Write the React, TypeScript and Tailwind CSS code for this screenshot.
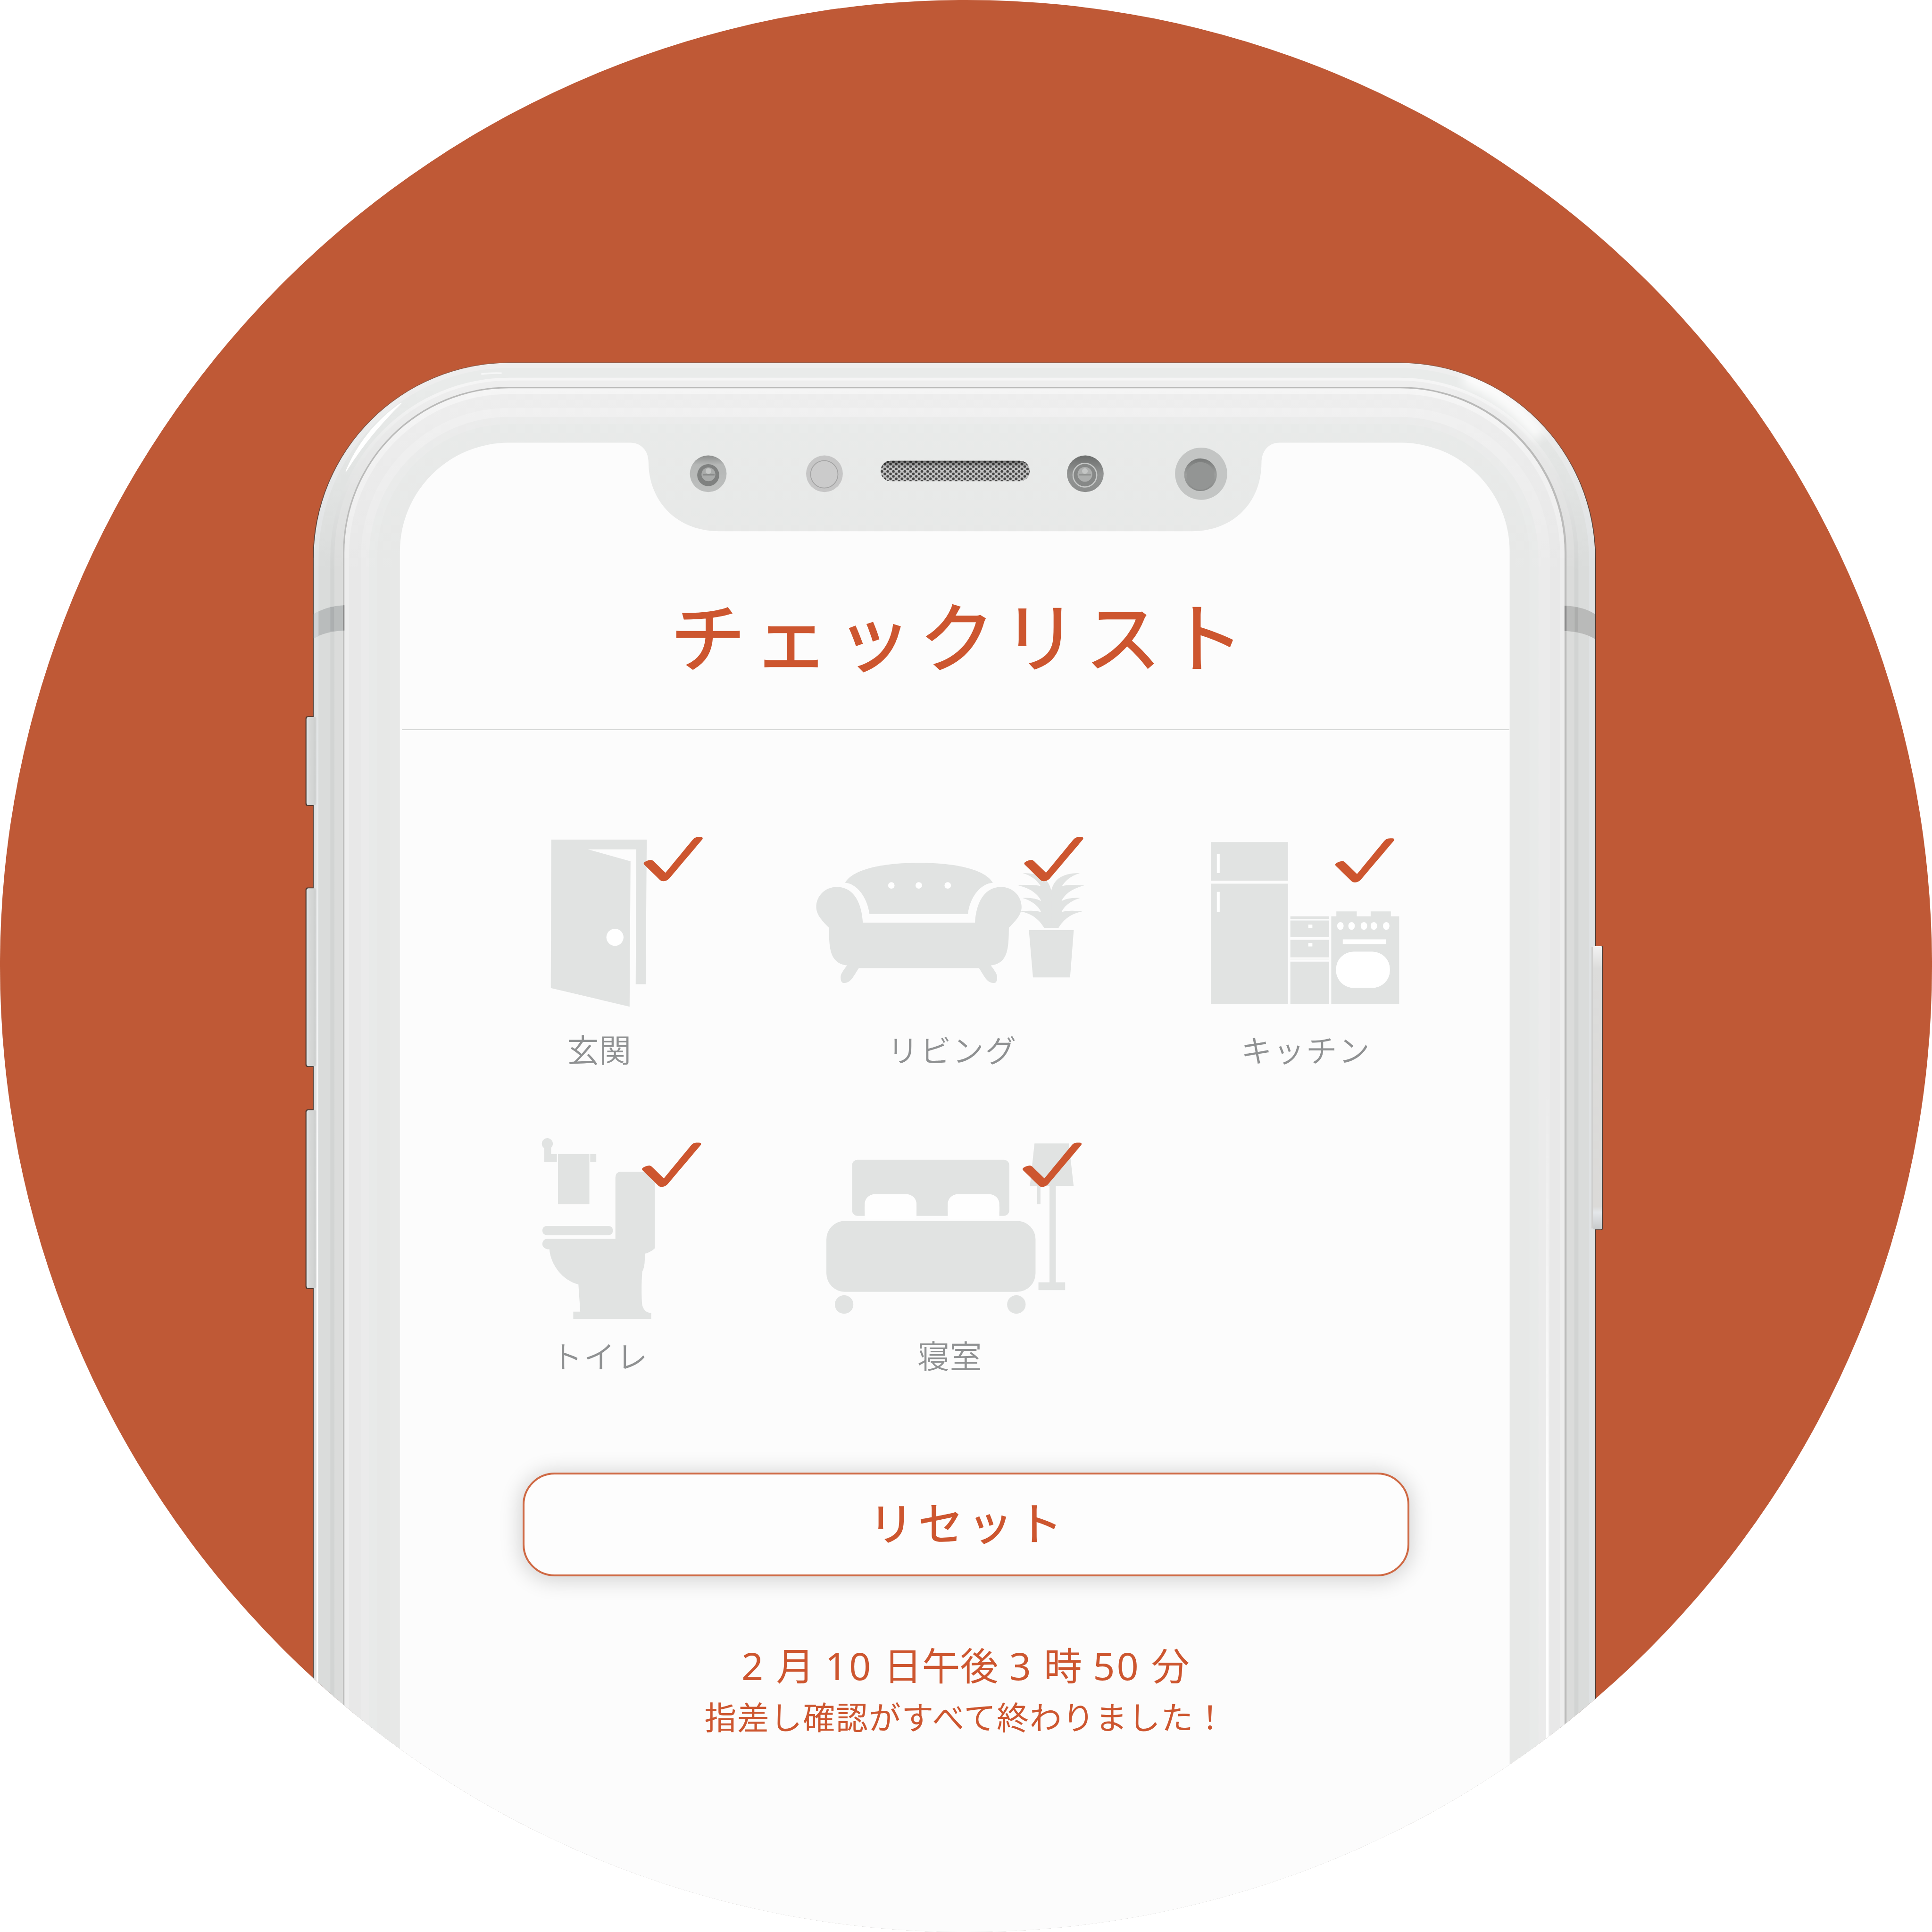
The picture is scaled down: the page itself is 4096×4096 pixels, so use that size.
import type { ReactNode } from "react";

const SHADE = "#e1e3e2";
const ACCENT = "#cd562f";

/* ---------- Phone hardware ---------- */

type Layer = { l: number; t: number; r: number; rad: number; top: string; side: string };

const LAYERS: Layer[] = [
  { l: 767, t: 888.5, r: 3913, rad: 482, top: "#8a5a48", side: "#4a3a33" },
  { l: 769, t: 890, r: 3911, rad: 480, top: "#eeeeee", side: "#dfe2e3" },
  { l: 781, t: 902, r: 3896, rad: 468, top: "#e9ebea", side: "#dadcdb" },
  { l: 810, t: 926, r: 3870, rad: 440, top: "#f5f5f5", side: "#d2d4d3" },
  { l: 820, t: 933, r: 3860, rad: 430, top: "#eeeeee", side: "#dbdcdb" },
  { l: 841, t: 948.5, r: 3841, rad: 406, top: "#b9b9b8", side: "#bcbcbb" },
  { l: 844.5, t: 952, r: 3836, rad: 403, top: "#f5f5f5", side: "#ededed" },
  { l: 856, t: 966, r: 3825, rad: 392, top: "#eeeeee", side: "#e8e8e8" },
  { l: 885, t: 1000, r: 3800, rad: 363, top: "#f1f1f1", side: "#ebebeb" },
  { l: 905, t: 1022, r: 3772, rad: 343, top: "#ececec", side: "#e8eae9" },
  { l: 925, t: 1040, r: 3750, rad: 323, top: "#e9ebea", side: "#e7e8e7" },
];

const shell = (l: number, t: number, r: number, rad: number) =>
  `M${l},4740 V${t + rad} A${rad},${rad} 0 0 1 ${l + rad},${t} H${r - rad} A${rad},${rad} 0 0 1 ${r},${t + rad} V4740 Z`;

const LEFT_BUTTONS = [
  { y: 1756, h: 220 },
  { y: 2176, h: 440 },
  { y: 2720, h: 440 },
];

function PhoneHardware() {
  return (
    <svg className="col-start-1 row-start-1 size-[4096px]" viewBox="0 0 4737 4737" fill="none" aria-hidden="true">
      <defs>
        {LAYERS.map((s, i) => (
          <linearGradient key={i} id={`shell${i}`} gradientUnits="userSpaceOnUse" x1="0" y1="900" x2="0" y2="1400">
            <stop offset="0.1" stopColor={s.top} />
            <stop offset="1" stopColor={s.side} />
          </linearGradient>
        ))}
        <linearGradient id="button" x1="0" y1="0" x2="0" y2="1">
          <stop offset="0" stopColor="#f2f2f2" />
          <stop offset="0.08" stopColor="#dcdcdb" />
          <stop offset="0.92" stopColor="#dbdad8" />
          <stop offset="0.94" stopColor="#e4e7ea" />
          <stop offset="1" stopColor="#c8cacb" />
        </linearGradient>
        <linearGradient id="key" x1="0" y1="0" x2="1" y2="0">
          <stop offset="0" stopColor="#e6eaeb" />
          <stop offset="0.25" stopColor="#d8dad9" />
          <stop offset="0.65" stopColor="#d2d4d3" />
          <stop offset="0.85" stopColor="#cccecd" />
          <stop offset="1" stopColor="#dddfe0" />
        </linearGradient>
        <linearGradient id="gleam" x1="0" y1="0" x2="0" y2="1">
          <stop offset="0" stopColor="#fff" stopOpacity="0" />
          <stop offset="0.5" stopColor="#fff" stopOpacity="1" />
        </linearGradient>
        <linearGradient id="lens" x1="0" y1="0" x2="0" y2="1">
          <stop offset="0" stopColor="#777978" />
          <stop offset="0.5" stopColor="#9c9e9d" />
          <stop offset="1" stopColor="#868887" />
        </linearGradient>
        <linearGradient id="rim" x1="0" y1="0" x2="0" y2="1">
          <stop offset="0" stopColor="#8b8d8c" />
          <stop offset="0.25" stopColor="#b5b7b6" />
          <stop offset="1" stopColor="#bdbfbe" />
        </linearGradient>
        <linearGradient id="rimDark" x1="0" y1="0" x2="0" y2="1">
          <stop offset="0" stopColor="#6b6d6c" />
          <stop offset="0.5" stopColor="#929493" />
          <stop offset="1" stopColor="#8b8d8c" />
        </linearGradient>
        <pattern id="mesh" width="14" height="12" patternUnits="userSpaceOnUse" x="2159" y="1129">
          <rect width="14" height="12" fill="#c4c4c4" />
          <circle cx="3.5" cy="3" r="3.3" fill="#444" />
          <circle cx="10.5" cy="9" r="3.3" fill="#444" />
        </pattern>
        <linearGradient id="meshShade" x1="0" y1="0" x2="0" y2="1">
          <stop offset="0" stopColor="#000" stopOpacity="0.5" />
          <stop offset="0.3" stopColor="#000" stopOpacity="0" />
        </linearGradient>
        <filter id="soft" x="-20%" y="-20%" width="140%" height="140%">
          <feGaussianBlur stdDeviation="12" />
        </filter>
        <clipPath id="band">
          <path d={shell(769, 890, 3911, 480)} />
        </clipPath>
      </defs>

      {LEFT_BUTTONS.map((b) => (
        <rect key={b.y} x="749" y={b.y} width="30" height={b.h} rx="5" fill="#4a3a33" />
      ))}
      <rect x="3900" y="2319" width="30" height="696" rx="3" fill="#4a3a33" />

      {LAYERS.map((s, i) => (
        <path key={i} d={shell(s.l, s.t, s.r, s.rad)} fill={`url(#shell${i})`} />
      ))}

      {/* Antenna bands */}
      <path d="M769,1506 Q800,1486 843,1484 V1546 Q800,1548 769,1565 Z" fill="#b9bcbc" />
      <path d="M769,1506 L781,1499 V1560 L769,1565 Z" fill="#cfd3d6" />
      <path d="M3837,1485 Q3885,1488 3911,1506 V1567 Q3885,1550 3837,1547 Z" fill="#b9bab9" />
      <rect x="841" y="1484" width="3.5" height="62" fill="#8a8a8a" />
      <rect x="3836" y="1485" width="5" height="62" fill="#8c8c8c" />
      <rect x="810" y="1488" width="9" height="60" fill="#acafb0" />
      <rect x="3861" y="1489" width="8" height="60" fill="#acadac" />

      {/* Side keys over the rail */}
      {LEFT_BUTTONS.map((b) => (
        <rect key={b.y} x="751.5" y={b.y + 2} width="25" height={b.h - 4} rx="5" fill="url(#key)" />
      ))}
      <rect x="3902" y="2322" width="4" height="690" fill="#cfcfce" />
      <rect x="3906" y="2320" width="22" height="694" rx="2" fill="url(#button)" />

      {/* Reflections */}
      <g clipPath="url(#band)">
        <path d="M848,1156 C872,1098 915,1036 984,988 C925,1046 885,1098 848,1156 Z" fill="#fff" stroke="#fff" strokeWidth="2" />
        <path d="M1180,917 Q1205,914 1230,915" stroke="#fff" strokeWidth="4" opacity="0.6" />
        <path d="M3590,925 C3670,955 3735,1015 3775,1070" stroke="#fff" strokeWidth="34" filter="url(#soft)" opacity="0.85" />
      </g>
      <rect x="776" y="1600" width="3.5" height="3140" fill="url(#gleam)" />
      <rect x="3791" y="2650" width="6" height="2090" fill="url(#gleam)" />

      {/* Display glass with the notch cut out */}
      <path
        d="M980.5,4740 V1353 A267,267 0 0 1 1247,1085.5 H1545 C1570,1085.5 1590,1103 1590,1134 C1591,1230 1660,1302.5 1764,1302.5 H2922 C3026,1302.5 3093,1230 3093,1134 C3094,1103 3112,1085.5 3138,1085.5 H3434 A267,267 0 0 1 3701.5,1353 V4740 Z"
        fill="#fcfcfc"
      />

      {/* Sensors and speaker */}
      <circle cx="1736.5" cy="1161.5" r="45" fill="url(#rim)" />
      <circle cx="1736.5" cy="1165" r="27" fill="#7f8180" />
      <circle cx="1737" cy="1163" r="17" fill="#a9abaa" />
      <rect x="1723" y="1162" width="29" height="4" fill="#8b8d8c" />
      <circle cx="1737" cy="1155" r="7" fill="#c4c6c5" />
      <circle cx="2021.5" cy="1161.5" r="45" fill="#c6c6c6" />
      <circle cx="2021" cy="1163" r="33.5" fill="#cbcbcb" stroke="#a2a2a2" strokeWidth="2" />
      <rect x="2159" y="1129.5" width="366" height="50.5" rx="25" fill="url(#mesh)" />
      <rect x="2159" y="1129.5" width="366" height="50.5" rx="25" fill="url(#meshShade)" />
      <circle cx="2661" cy="1161.5" r="45" fill="url(#rimDark)" />
      <circle cx="2660" cy="1165" r="29" fill="#868887" stroke="#c6c8c7" strokeWidth="3" />
      <circle cx="2660" cy="1163" r="18" fill="#adafae" />
      <rect x="2645" y="1162" width="30" height="4" fill="#939594" />
      <circle cx="2660" cy="1155" r="7" fill="#c4c6c5" />
      <circle cx="2945" cy="1161.5" r="64" fill="#c3c5c4" />
      <circle cx="2943.5" cy="1164" r="40" fill="url(#lens)" />
      <circle cx="2943.5" cy="1167" r="34" fill="#939594" />
    </svg>
  );
}

/* ---------- Room pictograms ---------- */

function Check({ x, y }: { x: number; y: number }) {
  return (
    <path
      transform={`translate(${x} ${y})`}
      fill={ACCENT}
      d="M1.5,68.5 C-1,66 0,63.5 3,61.5 C8,58.5 13,57 18,56.5 Q21,56.5 24,59.5 L53.5,88.2 L120,7.5 C125,1.5 130,0.8 135,0.6 H140 C145,0.8 146,3.5 143.5,7 L62.5,102.5 C58,107 53,109 48,109 Q43,109 40,106 Z"
    />
  );
}

const DoorIcon = () => (
  <>
    <path
      fill={SHADE}
      d="M1351.4,2058.9 H1585.5 L1583,2413.8 H1558.5 L1559.8,2082.9 H1441.3 L1545.8,2112 L1543.5,2468.5 L1350.3,2423 Z"
    />
    <circle cx="1507.6" cy="2298.5" r="21" fill="#fff" />
    <Check x={1578} y={2052} />
  </>
);

const PLANT_HALF =
  "M2577,2184.5 H2578 C2583,2160 2600,2141 2648,2141 C2625,2148 2612,2160 2604,2173 Q2622,2168 2659,2171.5 C2630,2178 2610,2193 2603,2209.5 Q2620,2200 2649,2202 C2625,2209 2608,2223 2603,2237 Q2618,2231 2654,2235 C2625,2240 2607,2256 2595.4,2275.7 H2577 Z";

const LivingIcon = () => (
  <>
    <g fill={SHADE}>
      <path d="M2072.4,2165 C2090,2133 2160,2116 2253.6,2116 S2417,2133 2434.7,2165 C2405,2166 2378,2200 2373.5,2241.3 H2132.1 C2127,2200 2100,2166 2072.4,2165 Z" />
      <path d="M2115.8,2262.4 C2113,2212 2092,2175 2052,2175 C2023,2175 2001.5,2197 2001.5,2224 C2001.5,2244 2018,2260 2032.7,2275 C2033,2330 2036,2362 2077,2367.5 C2063,2386 2061,2391 2061.5,2399 C2062,2409 2066,2411 2071,2410.5 C2088,2409 2093,2393 2106,2374 H2400.6 C2413.6,2393 2418.6,2409 2435.6,2410.5 C2440.6,2411 2444.6,2409 2445.1,2399 C2445.6,2391 2443.6,2386 2429.6,2367.5 C2470.6,2362 2473.6,2330 2473.9,2275 C2488.6,2260 2505.1,2244 2505.1,2224 C2505.1,2197 2483.6,2175 2454.6,2175 C2414.6,2175 2393.6,2212 2390.8,2262.4 Z" />
      <path d="M2523,2281 H2633 L2624,2396.8 H2533 Z" />
      <path d={PLANT_HALF} />
      <path d={PLANT_HALF} transform="translate(5156 0) scale(-1 1)" />
    </g>
    <g fill="#fff">
      <circle cx="2185.7" cy="2171.2" r="8" />
      <circle cx="2253" cy="2171.2" r="8" />
      <circle cx="2324" cy="2171.2" r="8" />
    </g>
    <Check x={2511.5} y={2052} />
  </>
);

const KitchenIcon = () => (
  <>
    <g fill={SHADE}>
      <rect x="2969.7" y="2065" width="189" height="94.6" />
      <rect x="2969.7" y="2167" width="189" height="294.4" />
      <rect x="3164.5" y="2247" width="94.5" height="6.7" />
      <rect x="3164.5" y="2257.3" width="94.5" height="41" />
      <rect x="3164.5" y="2304.7" width="94.5" height="43" />
      <rect x="3164.5" y="2351" width="94.5" height="2" opacity="0.5" />
      <rect x="3164.5" y="2358.2" width="94.5" height="103.2" />
      <rect x="3264.8" y="2247" width="166.5" height="214.4" />
      <rect x="3277.3" y="2235" width="50" height="13" />
      <rect x="3361.4" y="2235" width="49.5" height="13" />
    </g>
    <g fill="#fff">
      <rect x="2984.2" y="2094" width="7" height="47" />
      <rect x="2984.2" y="2187" width="7" height="49.3" />
      <rect x="3208.5" y="2267.4" width="10" height="8.3" />
      <rect x="3208.5" y="2312.6" width="10" height="8.3" />
      {[3287.2, 3314.6, 3344.9, 3369.3, 3399.6].map((cx) => (
        <ellipse key={cx} cx={cx} cy="2270.7" rx="8" ry="9.5" />
      ))}
      <rect x="3293" y="2303.5" width="106" height="11.5" />
      <rect x="3276.5" y="2333.7" width="132.2" height="88.8" rx="43" />
    </g>
    <Check x={3274.5} y={2055} />
  </>
);

const ToiletIcon = () => (
  <>
    <g fill={SHADE}>
      <circle cx="1341.8" cy="2805.1" r="13.5" />
      <path d="M1334.2,2812 H1351 V2830.8 H1365.2 V2849.5 H1334.2 Z" />
      <rect x="1367.9" y="2830.8" width="77" height="122.8" />
      <rect x="1447" y="2830.8" width="14.8" height="18.7" />
      <rect x="1329.6" y="3006.6" width="173" height="23" rx="11" />
      <path d="M1521,2874 H1590 Q1605.3,2875 1605.3,2890 V3061.5 Q1598,3069 1584,3074.2 H1580.7 V3090 Q1580.5,3108 1574.5,3119 C1572.5,3145 1572.5,3175 1574,3198 C1576,3212 1585,3220 1596.5,3220.1 V3235.1 H1405.4 V3216.8 H1422.5 L1418,3150.1 C1380,3141 1350,3103 1346.8,3063.9 H1342 C1334,3062 1329.6,3057 1329.6,3051.4 C1329.6,3044 1334,3038.6 1342,3038.6 H1508.7 V2888 Q1509,2875 1521,2874 Z" />
    </g>
    <Check x={1574} y={2802} />
  </>
);

const BedroomIcon = () => (
  <>
    <rect x="2089.3" y="2844.5" width="385.7" height="137.7" rx="14" fill={SHADE} />
    <g fill="#fefefe">
      <rect x="2120.4" y="2929" width="127" height="62" rx="24" />
      <rect x="2120.4" y="2955" width="127" height="36" rx="6" />
      <rect x="2324" y="2929" width="126.5" height="62" rx="24" />
      <rect x="2324" y="2955" width="126.5" height="36" rx="6" />
    </g>
    <g fill={SHADE}>
      <rect x="2026.5" y="2994.6" width="512.8" height="173.7" rx="45" />
      <circle cx="2069.9" cy="3199.4" r="22.7" />
      <circle cx="2492.3" cy="3199.4" r="22.7" />
      <path d="M2536.7,2804.7 H2620.9 L2632.7,2908.8 H2525.5 Z" />
      <rect x="2573.5" y="2905" width="15.5" height="242" />
      <rect x="2546.4" y="3145" width="65.5" height="19.2" />
      <rect x="2543.4" y="2905" width="8" height="48.6" />
    </g>
    <Check x={2507.5} y={2802} />
  </>
);

/* ---------- Screen ---------- */

type Room = { name: string; viewBox: string; icon: ReactNode; label: string };

const ROOMS: Room[] = [
  { name: "玄関", viewBox: "1036 2030 866.67 470", icon: <DoorIcon />, label: "text-[68px] tracking-[0.5px]" },
  { name: "リビング", viewBox: "1902.67 2030 866.67 470", icon: <LivingIcon />, label: "text-[66px] tracking-[3px]" },
  { name: "キッチン", viewBox: "2769.33 2030 866.67 470", icon: <KitchenIcon />, label: "text-[66px] tracking-[3px]" },
  { name: "トイレ", viewBox: "1036 2780 866.67 470", icon: <ToiletIcon />, label: "text-[66px] tracking-[3px] pl-[4px]" },
  { name: "寝室", viewBox: "1902.67 2780 866.67 470", icon: <BedroomIcon />, label: "text-[68px] tracking-[0.5px] -ml-[12px]" },
];

const Digits = ({ children }: { children: string }) => (
  <span className="font-['Noto_Sans',sans-serif] tracking-[4px]">{children}</span>
);

export default function App() {
  return (
    <main className="size-[4096px] bg-white font-['Noto_Sans_CJK_JP',sans-serif]">
      <div className="grid size-[4096px] overflow-hidden rounded-full bg-[#bf5936]">
        <PhoneHardware />
        <section className="col-start-1 row-start-1 mt-[938px] ml-[848px] flex w-[2352px] flex-col text-[#cd562f]">
          <header className="ml-[4px] flex h-[610px] justify-center border-b-[3px] border-[#d4d6d5] pt-[304px] pl-[22px]">
            <h1 className="h-[200px] text-[160px] leading-[200px] font-normal tracking-[16px] whitespace-nowrap [-webkit-text-stroke:2.5px_#cd562f]">
              チェックリスト
            </h1>
          </header>

          <div className="mt-[207px] ml-[47.5px] grid w-[2248px] grid-cols-3 gap-y-[137px]">
            {ROOMS.map((room) => (
              <div key={room.name} className="flex flex-col items-center">
                <svg className="h-[406.4px] w-full" viewBox={room.viewBox} aria-hidden="true">
                  {room.icon}
                </svg>
                <p className={`mt-[17px] h-[88px] leading-[90px] font-[350] text-[#8f9192] ${room.label}`}>
                  {room.name}
                </p>
              </div>
            ))}
          </div>

          <button
            type="button"
            className="mt-[207px] ml-[260px] flex h-[220px] w-[1880px] items-center justify-center rounded-[68px] border-[4px] border-[#cf6a45] bg-[#fdfdfd] pb-[14px] pl-[8px] text-[95px] leading-none font-normal tracking-[10px] shadow-[0_4px_44px_6px_rgba(0,0,0,0.16)] [-webkit-text-stroke:1.5px_#cd562f]"
          >
            リセット
          </button>

          <div className="mt-[135px] ml-[260px] flex w-[1878px] flex-col items-center">
            <p className="h-[100px] text-[81px] leading-[100px] [word-spacing:5px] whitespace-nowrap">
              <Digits>2</Digits> 月 <Digits>10</Digits> 日午後 <Digits>3</Digits> 時 <Digits>50</Digits> 分
            </p>
            <p className="mt-[21px] h-[80px] text-[68px] leading-[80px] tracking-[1.7px] whitespace-nowrap">
              指差し確認がすべて終わりました！
            </p>
          </div>
        </section>
      </div>
    </main>
  );
}
